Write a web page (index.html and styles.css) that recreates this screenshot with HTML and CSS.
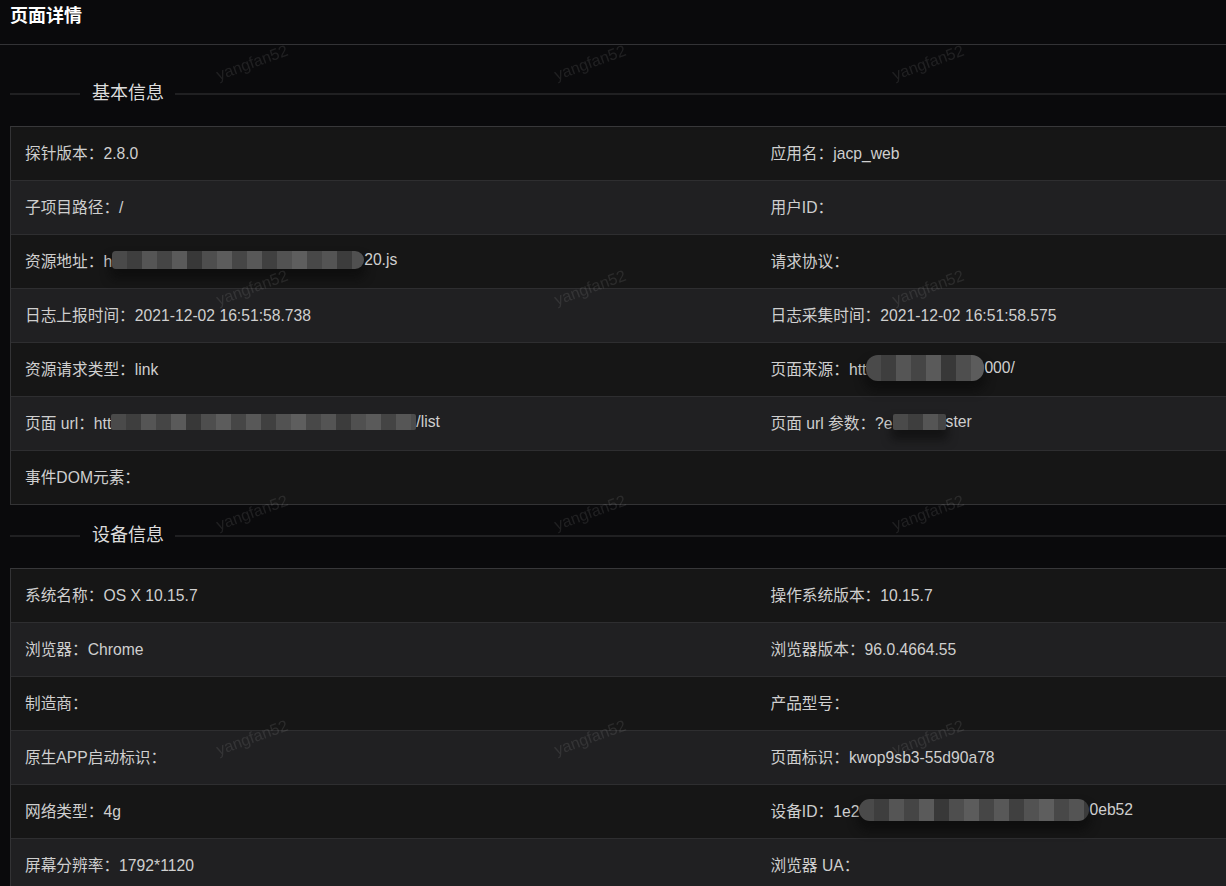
FILE: index.html
```html
<!DOCTYPE html>
<html lang="zh-CN">
<head>
<meta charset="utf-8">
<title>页面详情</title>
<link rel="stylesheet" href="styles.css">
</head>
<body>
<div class="page">
  <div class="header">页面详情</div>

  <div class="divider first"><span class="divider-line short"></span><span class="divider-text">基本信息</span><span class="divider-line long"></span></div>
  <div class="table">
    <div class="row odd"><div class="cell">探针版本：2.8.0</div><div class="cell">应用名：jacp_web</div></div>
    <div class="row even"><div class="cell">子项目路径：/</div><div class="cell">用户ID：</div></div>
    <div class="row odd"><div class="cell">资源地址：h<span class="mosaic m1"></span>20.js</div><div class="cell">请求协议：</div></div>
    <div class="row even"><div class="cell">日志上报时间：2021-12-02 16:51:58.738</div><div class="cell">日志采集时间：2021-12-02 16:51:58.575</div></div>
    <div class="row odd"><div class="cell">资源请求类型：link</div><div class="cell">页面来源：htt<span class="mosaic m2"></span>000/</div></div>
    <div class="row even"><div class="cell">页面 url：htt<span class="mosaic m3"></span>/list</div><div class="cell">页面 url 参数：?e<span class="mosaic m4"></span>ster</div></div>
    <div class="row odd"><div class="cell">事件DOM元素：</div><div class="cell"></div></div>
  </div>

  <div class="divider"><span class="divider-line short"></span><span class="divider-text">设备信息</span><span class="divider-line long"></span></div>
  <div class="table">
    <div class="row odd"><div class="cell">系统名称：OS X 10.15.7</div><div class="cell">操作系统版本：10.15.7</div></div>
    <div class="row even"><div class="cell">浏览器：Chrome</div><div class="cell">浏览器版本：96.0.4664.55</div></div>
    <div class="row odd"><div class="cell">制造商：</div><div class="cell">产品型号：</div></div>
    <div class="row even"><div class="cell">原生APP启动标识：</div><div class="cell">页面标识：kwop9sb3-55d90a78</div></div>
    <div class="row odd"><div class="cell">网络类型：4g</div><div class="cell">设备ID：1e2<span class="mosaic m5"></span>0eb52</div></div>
    <div class="row even"><div class="cell">屏幕分辨率：1792*1120</div><div class="cell">浏览器 UA：</div></div>
  </div>
</div>

<div class="watermarks" aria-hidden="true">
  <span class="wm">yangfan52</span><span class="wm">yangfan52</span><span class="wm">yangfan52</span>
  <span class="wm">yangfan52</span><span class="wm">yangfan52</span><span class="wm">yangfan52</span>
  <span class="wm">yangfan52</span><span class="wm">yangfan52</span><span class="wm">yangfan52</span>
  <span class="wm">yangfan52</span><span class="wm">yangfan52</span><span class="wm">yangfan52</span>
</div>
</body>
</html>
```

FILE: styles.css
```css
html, body {
  margin: 0;
  padding: 0;
  overflow: hidden;
  background: #0a0a0c;
}

body {
  font-family: "Liberation Sans", "Noto Sans CJK SC", sans-serif;
  color: #cfcfcf;
}

.page {
  width: 1502px;
}

.header {
  height: 44px;
  line-height: 32px;
  padding-left: 10px;
  border-bottom: 1px solid #333336;
  font-size: 18px;
  font-weight: bold;
  color: #ffffff;
}

.divider {
  display: flex;
  align-items: center;
  height: 36px;
  margin: 13px 0 14px 10px;
}

.divider.first {
  margin-top: 31px;
}

.divider-line {
  height: 2px;
  background: #202022;
}

.divider-line.short {
  width: 70px;
}

.divider-line.long {
  flex: 1;
}

.divider-text {
  padding: 0 11px 2px 12px;
  font-size: 18px;
  line-height: 34px;
  color: #dcdcdc;
}

.table {
  margin-left: 10px;
  border: 1px solid #333335;
  border-top-color: #38383a;
  border-right: none;
}

.row {
  display: grid;
  grid-template-columns: 1fr 1fr;
  height: 53px;
  border-top: 1px solid #2e2e30;
}

.row:first-child {
  border-top: none;
}

.row.odd {
  background: #161616;
}

.row.even {
  background: #202022;
}

.cell {
  display: flex;
  align-items: center;
  padding-left: 14px;
  padding-bottom: 3px;
  box-sizing: border-box;
  font-size: 15.7px;
  white-space: nowrap;
  color: #cfcfcf;
}

.mosaic {
  display: inline-block;
  height: 18px;
  border-radius: 4px 9px 9px 4px;
  background:
    linear-gradient(90deg,
      #4a4a4a 0 15px, #3e3e3e 15px 30px, #555 30px 45px, #454545 45px 60px,
      #5a5a5a 60px 75px, #383838 75px 90px, #4e4e4e 90px 105px, #5c5c5c 105px 120px,
      #464646 120px 135px, #585858 135px 150px, #404040 150px 165px, #525252 165px 180px,
      #5e5e5e 180px 195px, #484848 195px 210px, #545454 210px 225px, #3c3c3c 225px 240px,
      #505050 240px 255px, #5a5a5a 255px 270px, #444 270px 285px, #565656 285px 300px,
      #4c4c4c 300px 315px);
  box-shadow: 0 8px 10px 2px rgba(10, 10, 10, 0.55);
}

.m1 { width: 252px; }
.m2 { width: 118px; height: 26px; border-radius: 12px; }
.m3 { width: 305px; height: 16px; border-radius: 2px; box-shadow: none; }
.m4 { width: 53px; height: 16px; border-radius: 2px; }
.m5 { width: 230px; height: 22px; border-radius: 11px; }

.watermarks {
  position: fixed;
  left: 83px;
  top: -50px;
  display: grid;
  grid-template-columns: repeat(3, 338px);
  grid-auto-rows: 225px;
  pointer-events: none;
}

.wm {
  display: flex;
  align-items: center;
  justify-content: center;
  font-family: "Liberation Sans", sans-serif;
  font-size: 16px;
  color: rgba(255, 255, 255, 0.09);
  transform: rotate(-20deg);
}
```
